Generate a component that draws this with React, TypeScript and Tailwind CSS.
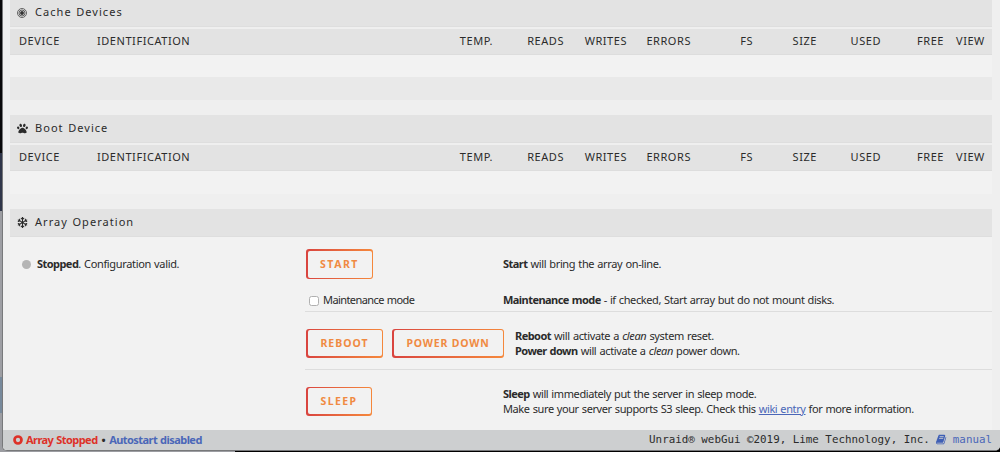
import type { ReactNode } from 'react'
import { FaPaw, FaRegSnowflake } from 'react-icons/fa'

function TargetIcon() {
  return (
    <svg viewBox="0 0 20 20" className="h-[10px] w-[10px]" fill="none" stroke="#444" strokeWidth="1.6">
      <circle cx="10" cy="10" r="9" />
      <circle cx="10" cy="10" r="6" />
      <circle cx="10" cy="10" r="3.9" fill="#333" stroke="none" />
    </svg>
  )
}

function BookIcon() {
  return (
    <svg viewBox="0 0 1792 1792" className="h-[11px] w-[11px]" fill="#3f5fb5">
      <path d="M1639 478q40 57 18 129l-275 906q-19 64-76.5 107.5t-122.5 43.5h-923q-77 0-148.5-53.5t-99.5-131.5q-24-67-2-127 0-4 3-27t4-37q1-8-3-21.5t-3-19.5q2-11 8-21t16.5-23.5 16.5-23.5q23-38 45-91.5t30-91.5q3-10 .5-30t-.5-28q3-11 17-28t17-23q21-36 42-92t25-90q1-9-2.5-32t.5-28q4-13 22-30.5t22-22.5q19-26 42.5-84.5t27.5-96.5q1-8-3-25.5t-2-26.5q2-8 9-18t18-23 17-21q8-12 16.5-30.5t15-35 16-36 19.5-32 26.5-23.5 36-11.5 47.5 5.5l-1 3q38-9 51-9h761q74 0 114 56t18 130l-274 906q-36 119-71.5 153.5t-128.5 34.5h-869q-27 0-38 15-11 16-1 43 24 70 144 70h923q29 0 56-15.5t35-41.5l300-987q7-22 5-57 38 15 59 43zm-1064 2q-4 13 2 22.5t20 9.5h608q13 0 25.5-9.5t16.5-22.5l21-64q4-13-2-22.5t-20-9.5h-608q-13 0-25.5 9.5t-16.5 22.5zm-83 256q-4 13 2 22.5t20 9.5h608q13 0 25.5-9.5t16.5-22.5l21-64q4-13-2-22.5t-20-9.5h-608q-13 0-25.5 9.5t-16.5 22.5z" />
    </svg>
  )
}

const columns = [
  { label: 'TEMP.', className: 'w-[83px]' },
  { label: 'READS', className: 'w-[71px]' },
  { label: 'WRITES', className: 'w-[63px]' },
  { label: 'ERRORS', className: 'w-[64px]' },
  { label: 'FS', className: 'w-[62px]' },
  { label: 'SIZE', className: 'w-[64px]' },
  { label: 'USED', className: 'w-[64px]' },
  { label: 'FREE', className: 'w-[63px]' },
]

function SectionTitle({ icon, title, className }: { icon: ReactNode; title: string; className: string }) {
  return (
    <div className={`flex items-center border-b border-[#dedede] bg-[#e3e3e3] pl-[7px] tracking-[1.05px] ${className}`}>
      <span className="w-[18px]">{icon}</span>
      <span>{title}</span>
    </div>
  )
}

function TableHead() {
  return (
    <div className="mt-[2px] flex h-[26px] items-center border-b border-[#dddddd] bg-[#e3e3e3] pb-[1px] tracking-[0.55px]">
      <span className="w-[78px] pl-[9px]">DEVICE</span>
      <span className="w-[322px] pl-[9px]">IDENTIFICATION</span>
      {columns.map((col) => (
        <span key={col.label} className={`text-right ${col.className}`}>
          {col.label}
        </span>
      ))}
      <span className="pl-[12px]">VIEW</span>
    </div>
  )
}

function ActionButton({ children, className }: { children: string; className: string }) {
  return (
    <button className={`flex rounded-[3px] bg-gradient-to-r from-[#d9443f] to-[#f5883c] p-[1.5px] ${className}`}>
      <span className="flex h-full w-full items-center justify-center rounded-[2px] bg-[#f2f2f2] pt-[1px] text-[10.5px] font-bold whitespace-nowrap text-[#f08a42]">
        {children}
      </span>
    </button>
  )
}

export default function App() {
  return (
    <div className="flex h-[452px] w-[1000px] overflow-hidden bg-[linear-gradient(to_right,#9c9da2_235px,#000_235px)] font-['Noto_Sans',sans-serif] text-[11px] tracking-[-0.4px] text-[#2b2b2b] [word-spacing:0.6px] [&_b]:tracking-[-0.55px]">
      <div className="flex w-[2px] shrink-0 flex-col">
        <div className="h-[153px] bg-[#09090b]" />
        <div className="h-[58px] bg-[#30364a]" />
        <div className="h-[166px] bg-[#9c9da2]" />
        <div className="h-[36px] bg-[#77899b]" />
        <div className="flex-1 bg-[#9c9da2]" />
      </div>
      <div className="flex h-[451px] w-[998px] flex-col overflow-hidden rounded-b-[5px] border-b border-l border-[#77787a] bg-[#efefef]">
        <main className="ml-[7px] flex h-[430px] w-[982px] shrink-0 flex-col">
          <SectionTitle icon={<TargetIcon />} title="Cache Devices" className="h-[27px] pb-[1px]" />
          <TableHead />
          <div className="h-[22px] bg-[#f2f2f2]" />
          <div className="h-[23px] bg-[#e9e9e9]" />

          <SectionTitle icon={<FaPaw size={11} />} title="Boot Device" className="mt-[15px] h-[28px]" />
          <TableHead />
          <div className="h-[23px] bg-[#f2f2f2]" />

          <SectionTitle icon={<FaRegSnowflake size={11} />} title="Array Operation" className="mt-[15px] h-[28px] pb-[1px]" />
          <div className="flex flex-1 bg-[#f2f2f2]">
            <div className="flex h-[54px] w-[295px] items-center pl-[12px]">
              <span className="mr-[6px] h-[9px] w-[9px] rounded-full bg-[#b5b5b5]" />
              <span className="tracking-[-0.34px]">
                <b>Stopped</b>. Configuration valid.
              </span>
            </div>
            <div className="flex w-[687px] flex-col">
              <div className="flex h-[75px] flex-col border-b border-[#dddddd]">
                <div className="flex h-[54px] items-center">
                  <div className="w-[198px]">
                    <ActionButton className="ml-[1px] h-[30px] w-[67px] tracking-[1.5px]">START</ActionButton>
                  </div>
                  <span className="tracking-[-0.36px]">
                    <b>Start</b> will bring the array on-line.
                  </span>
                </div>
                <div className="flex h-[18px] items-center">
                  <label className="flex w-[198px] items-center pl-[4px] tracking-[-0.58px]">
                    <input
                      type="checkbox"
                      className="mt-[2px] mr-[4px] h-[10px] w-[10px] appearance-none rounded-[2.5px] border border-[#b0b0b0] bg-white"
                    />
                    Maintenance mode
                  </label>
                  <span className="tracking-[-0.4px] [&_b]:tracking-[-0.7px]">
                    <b>Maintenance mode</b> - if checked, Start array but do not mount disks.
                  </span>
                </div>
              </div>
              <div className="flex h-[58px] items-center border-b border-[#dddddd] pt-[5px]">
                <ActionButton className="ml-[1px] h-[29px] w-[77px] tracking-[1px]">REBOOT</ActionButton>
                <ActionButton className="ml-[9px] h-[29px] w-[112px] tracking-[0.8px]">POWER DOWN</ActionButton>
                <div className="pl-[11px] leading-[15px] tracking-[-0.36px]">
                  <p>
                    <b>Reboot</b> will activate a <i>clean</i> system reset.
                  </p>
                  <p>
                    <b>Power down</b> will activate a <i>clean</i> power down.
                  </p>
                </div>
              </div>
              <div className="flex flex-1 items-center pt-[2px]">
                <div className="w-[198px]">
                  <ActionButton className="ml-[1px] h-[29px] w-[66px] tracking-[1.4px]">SLEEP</ActionButton>
                </div>
                <div className="leading-[15px]">
                  <p>
                    <b>Sleep</b> will immediately put the server in sleep mode.
                  </p>
                  <p>
                    Make sure your server supports S3 sleep. Check this{' '}
                    <a href="#" className="text-[#4b67b8] underline">
                      wiki entry
                    </a>{' '}
                    for more information.
                  </p>
                </div>
              </div>
            </div>
          </div>
        </main>
        <footer className="flex h-[20px] shrink-0 items-center justify-between bg-[#cdcfd0] pr-[8px] pl-[10px]">
          <div className="flex items-center font-bold tracking-[-0.55px]">
            <svg viewBox="0 0 10 10" className="mr-[3px] h-[10px] w-[10px]" fill="none" stroke="#dd3128" strokeWidth="2.7">
              <circle cx="5" cy="5" r="3.5" />
            </svg>
            <span className="text-[#dd3128]">Array Stopped</span>
            <span className="px-[4px]">•</span>
            <span className="text-[#4b67b8]">Autostart disabled</span>
          </div>
          <div className="flex items-center font-['DejaVu_Sans_Mono',monospace] text-[10.85px] tracking-normal [word-spacing:normal]">
            <span className="mr-[6px]">Unraid® webGui ©2019, Lime Technology, Inc.</span>
            <BookIcon />
            <span className="ml-[6px] text-[#4b67b8]">manual</span>
          </div>
        </footer>
      </div>
    </div>
  )
}
